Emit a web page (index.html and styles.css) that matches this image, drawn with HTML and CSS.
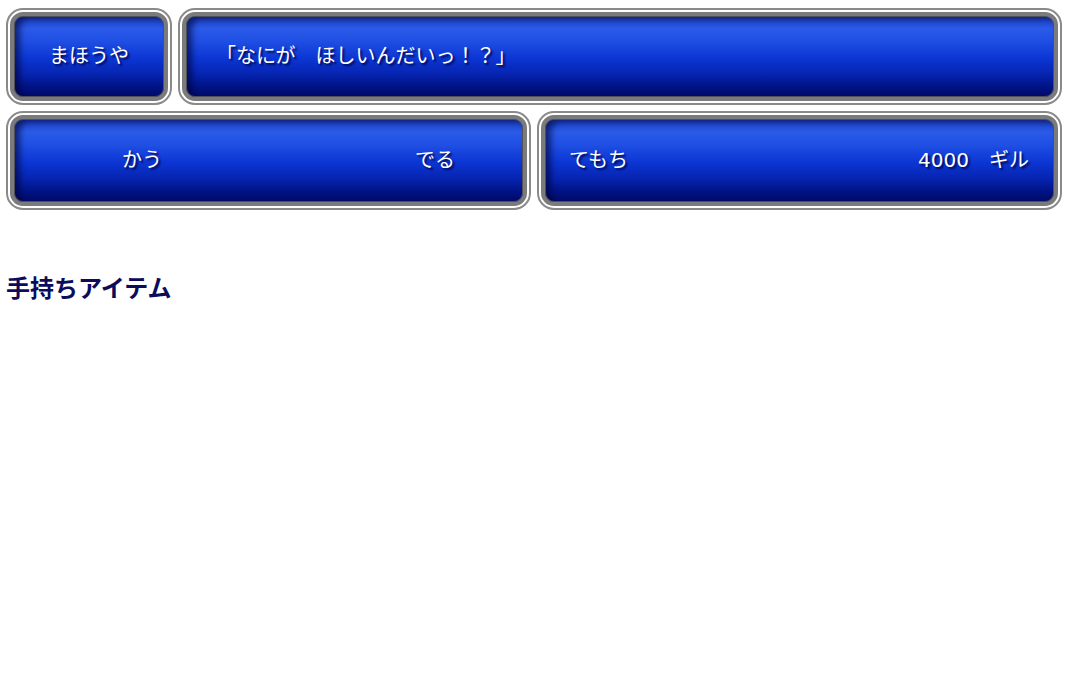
FILE: index.html
```html
<!DOCTYPE html>
<html lang="ja">
<head>
<meta charset="utf-8">
<title>まほうや</title>
<link rel="stylesheet" href="styles.css">
</head>
<body>
<div class="page">
  <div class="row row-top">
    <div class="box box-shop">
      <div class="panel panel-center"><span class="label">まほうや</span></div>
    </div>
    <div class="box box-msg">
      <div class="panel panel-msg"><span class="label">「なにが　ほしいんだいっ！？」</span></div>
    </div>
  </div>
  <div class="row row-bottom">
    <div class="box box-half">
      <div class="panel panel-menu">
        <span class="label">かう</span>
        <span class="label">でる</span>
      </div>
    </div>
    <div class="box box-half">
      <div class="panel panel-gold">
        <span class="label">てもち</span>
        <span class="label">4000　ギル</span>
      </div>
    </div>
  </div>
  <h2 class="heading">手持ちアイテム</h2>
</div>
</body>
</html>
```

FILE: styles.css
```css
html, body {
  margin: 0;
  padding: 0;
  background: #fff;
}

.page {
  padding: 8px 8px 0 6px;
  font-family: "DejaVu Sans", "Noto Sans CJK JP", sans-serif;
}

.row {
  display: flex;
  gap: 6px;
}

.row-bottom {
  margin-top: 6px;
}

.box {
  border: 2px solid #8a8a8a;
  border-radius: 17px;
  padding: 2px;
  background: #fff;
  box-sizing: border-box;
}

.box-shop {
  width: 166px;
  flex: none;
}

.box-msg {
  flex: 1;
}

.box-half {
  flex: 1;
}

.panel {
  border: 4px solid #7b7b7b;
  border-radius: 13px;
  height: 81px;
  box-sizing: content-box;
  padding-bottom: 4px;
  display: flex;
  align-items: center;
  background: linear-gradient(to bottom,
    #1c40c4 0%,
    #2a5ae8 16%,
    #2050e4 30%,
    #0c36d4 52%,
    #0624b0 72%,
    #001283 88%,
    #000a66 100%);
  box-shadow:
    inset 0 0 0 1px #50505a,
    inset 6px 3px 6px rgba(0, 0, 50, 0.6);
}

.row-top .panel {
  height: 77px;
}

.row-bottom .panel {
  height: 79px;
  padding-bottom: 4px;
}

.label {
  color: #fff;
  font-size: 20px;
  text-shadow: 2px 2px 2px #000a58;
  white-space: pre;
}

.panel-center {
  justify-content: center;
}

.panel-msg {
  padding-left: 30px;
}

.panel-menu {
  justify-content: space-between;
  padding-left: 108px;
  padding-right: 68px;
}

.panel-gold {
  justify-content: space-between;
  padding-left: 24px;
  padding-right: 25px;
}

.heading {
  margin: 63px 0 0 0;
  font-size: 24px;
  font-weight: bold;
  color: #0c0c5c;
  font-family: "Noto Sans CJK JP", sans-serif;
  line-height: 1.2;
}
```
